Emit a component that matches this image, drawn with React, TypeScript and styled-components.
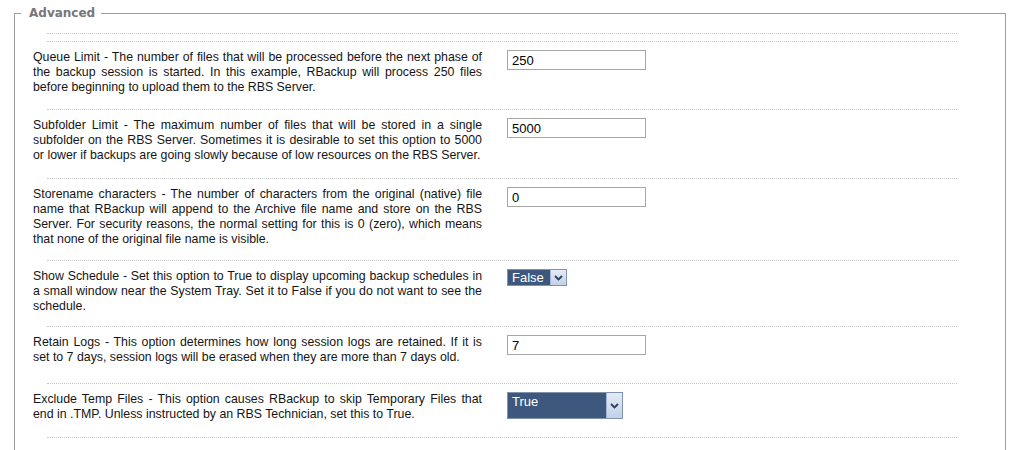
import { createGlobalStyle } from 'styled-components';
import styled from 'styled-components';

const GlobalStyle = createGlobalStyle`
  html, body {
    margin: 0;
    padding: 0;
    background: #fff;
  }
`;

const Page = styled.div`
  padding: 5px 12px 0 14px;
  width: 1018px;
  box-sizing: border-box;
`;

const Fieldset = styled.fieldset`
  margin: 0;
  padding: 12px 0 40px 18px;
  border: 1px solid #9c9c9c;
  min-width: 0;
  width: 992px;
  box-sizing: border-box;
`;

const Legend = styled.legend`
  margin-left: -12px;
  padding: 1px 6px 0 8px;
  font-family: 'DejaVu Sans', Verdana, sans-serif;
  font-weight: bold;
  font-size: 12px;
  line-height: 15px;
  color: #777;
`;

const Divider = styled.div<{ $gap?: number }>`
  margin-left: 14px;
  width: 910px;
  border-top: 1px dotted #c8c8c8;
  height: ${(p) => p.$gap ?? 0}px;
  border-bottom: ${(p) => (p.$gap ? '1px dotted #c8c8c8' : 'none')};
`;

const Row = styled.div<{ $bottom?: number }>`
  display: grid;
  grid-template-columns: 449px 1fr;
  column-gap: 25px;
  align-items: start;
  padding: 8px 0 ${(p) => p.$bottom ?? 15}px;
`;

const Description = styled.p`
  margin: 0;
  font-family: 'Liberation Sans', Arial, sans-serif;
  font-size: 12.35px;
  line-height: 15px;
  color: #151515;
  text-align: justify;
`;

const TextInput = styled.input`
  width: 139px;
  height: 20px;
  box-sizing: border-box;
  border: 1px solid #a6a6a6;
  padding: 0 4px;
  margin: 0;
  font-family: 'Liberation Sans', Arial, sans-serif;
  font-size: 13px;
  color: #000;
  background: #fff;
  outline: none;
`;

const SelectBox = styled.div<{ $width: number; $height: number }>`
  display: flex;
  width: ${(p) => p.$width}px;
  height: ${(p) => p.$height}px;
  background: #3d587c;
  border: 1px solid #7f93b0;
  box-sizing: border-box;
`;

const SelectValue = styled.span<{ $pad: number }>`
  flex: 1;
  color: #fff;
  font-family: 'Liberation Sans', Arial, sans-serif;
  font-size: 13px;
  line-height: 15px;
  padding: ${(p) => p.$pad}px 0 0 4px;
`;

const SelectArrow = styled.span`
  width: 16px;
  display: flex;
  align-items: center;
  justify-content: center;
  background: linear-gradient(#e4ebf6, #c3d0e6);
  border-left: 1px solid #a3b6d4;
  box-sizing: border-box;
`;

type Option = {
  text: string;
  control:
    | { kind: 'input'; value: string }
    | { kind: 'select'; value: string; width: number; height: number; pad: number };
  bottom?: number;
};

const options: Option[] = [
  {
    text: 'Queue Limit - The number of files that will be processed before the next phase of the backup session is started. In this example, RBackup will process 250 files before beginning to upload them to the RBS Server.',
    control: { kind: 'input', value: '250' },
    bottom: 14,
  },
  {
    text: 'Subfolder Limit - The maximum number of files that will be stored in a single subfolder on the RBS Server. Sometimes it is desirable to set this option to 5000 or lower if backups are going slowly because of low resources on the RBS Server.',
    control: { kind: 'input', value: '5000' },
  },
  {
    text: 'Storename characters - The number of characters from the original (native) file name that RBackup will append to the Archive file name and store on the RBS Server. For security reasons, the normal setting for this is 0 (zero), which means that none of the original file name is visible.',
    control: { kind: 'input', value: '0' },
    bottom: 13,
  },
  {
    text: 'Show Schedule - Set this option to True to display upcoming backup schedules in a small window near the System Tray. Set it to False if you do not want to see the schedule.',
    control: { kind: 'select', value: 'False', width: 60, height: 17, pad: 0 },
    bottom: 12,
  },
  {
    text: 'Retain Logs - This option determines how long session logs are retained. If it is set to 7 days, session logs will be erased when they are more than 7 days old.',
    control: { kind: 'input', value: '7' },
    bottom: 18,
  },
  {
    text: 'Exclude Temp Files - This option causes RBackup to skip Temporary Files that end in .TMP. Unless instructed by an RBS Technician, set this to True.',
    control: { kind: 'select', value: 'True', width: 116, height: 27, pad: 1 },
    bottom: 15,
  },
];

function Chevron() {
  return (
    <svg width="9" height="6" viewBox="0 0 9 6">
      <polyline
        points="1,1 4.5,4.5 8,1"
        fill="none"
        stroke="#2a3d63"
        strokeWidth="1.8"
      />
    </svg>
  );
}

export default function App() {
  return (
    <>
      <GlobalStyle />
      <Page>
        <Fieldset>
          <Legend>Advanced</Legend>
          <Divider $gap={7} />
          {options.map((opt) => (
            <div key={opt.text}>
              <Row $bottom={opt.bottom}>
                <Description>{opt.text}</Description>
                {opt.control.kind === 'input' ? (
                  <TextInput defaultValue={opt.control.value} />
                ) : (
                  <SelectBox
                    $width={opt.control.width}
                    $height={opt.control.height}
                  >
                    <SelectValue $pad={opt.control.pad}>
                      {opt.control.value}
                    </SelectValue>
                    <SelectArrow>
                      <Chevron />
                    </SelectArrow>
                  </SelectBox>
                )}
              </Row>
              <Divider />
            </div>
          ))}
        </Fieldset>
      </Page>
    </>
  );
}
